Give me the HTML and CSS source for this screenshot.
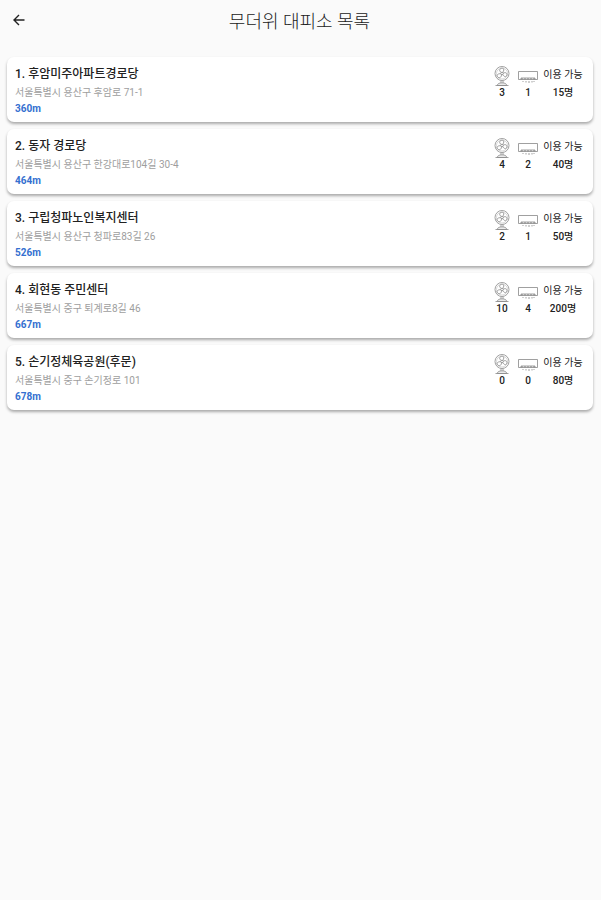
FILE: index.html
```html
<!DOCTYPE html>
<html lang="ko">
<head>
    <meta charset="UTF-8">
    <meta name="viewport" content="width=device-width, initial-scale=1.0">
    <title>무더위 대피소 목록</title>
    <link rel="stylesheet" href="styles.css">
</head>
<body>
    <!-- 아이콘 -->
    <svg class="sprite" aria-hidden="true">
        <symbol id="fan" viewBox="0 0 16 20">
            <circle cx="8" cy="7.5" r="7"/>
            <circle cx="8" cy="7.5" r="5.5" stroke-opacity="0.4"/>
            <circle cx="8" cy="7.5" r="1.3"/>
            <path d="M7.3 6.4C4.5 5 5.5 2 8.5 2.3C10.5 2.5 10 5 8.700 6.400M9.200 7.200C12 5.500 14 8 12.500 10C11.300 11.500 9.500 10 8.800 8.600M7.500 8.700C7.500 12 4.500 12.500 3.200 10.500C2.300 8.700 4.500 7.500 6.700 7.700"/>
            <path d="M7 14.5V17M9 14.5V17M3.500 19.300C3.500 17.500 5 17 8 17S12.500 17.500 12.500 19.300ZM1.500 19.500H14.500"/>
        </symbol>
        <symbol id="aircon" viewBox="0 0 20 14">
            <path d="M.5 1.5H19.5V9.5H.5ZM3 9.5V8H17V9.5"/>
            <path d="M3 8.800H17" stroke-dasharray="2 1"/>
            <path d="M5 11V12M8 11V12.500M11 11V13M14 11V12.500M16 11V12"/>
        </symbol>
    </svg>

    <header class="header">
        <button class="back" type="button" aria-label="뒤로">
            <svg viewBox="0 0 12 12"><path d="M11.5 6H1M6 1L1 6L6 11"/></svg>
        </button>
        <h1 class="title">무더위 대피소 목록</h1>
    </header>

    <main class="list">
        <article class="card">
            <div class="info">
                <h2 class="name">1. 후암미주아파트경로당</h2>
                <p class="address">서울특별시 용산구 후암로 71-1</p>
                <p class="distance">360m</p>
            </div>
            <div class="stats">
                <div class="stat"><svg class="fan"><use href="#fan"/></svg><span>3</span></div>
                <div class="stat"><svg class="aircon"><use href="#aircon"/></svg><span>1</span></div>
                <div class="stat capacity"><span class="label">이용 가능</span><span>15명</span></div>
            </div>
        </article>
        <article class="card">
            <div class="info">
                <h2 class="name">2. 동자 경로당</h2>
                <p class="address">서울특별시 용산구 한강대로104길 30-4</p>
                <p class="distance">464m</p>
            </div>
            <div class="stats">
                <div class="stat"><svg class="fan"><use href="#fan"/></svg><span>4</span></div>
                <div class="stat"><svg class="aircon"><use href="#aircon"/></svg><span>2</span></div>
                <div class="stat capacity"><span class="label">이용 가능</span><span>40명</span></div>
            </div>
        </article>
        <article class="card">
            <div class="info">
                <h2 class="name">3. 구립청파노인복지센터</h2>
                <p class="address">서울특별시 용산구 청파로83길 26</p>
                <p class="distance">526m</p>
            </div>
            <div class="stats">
                <div class="stat"><svg class="fan"><use href="#fan"/></svg><span>2</span></div>
                <div class="stat"><svg class="aircon"><use href="#aircon"/></svg><span>1</span></div>
                <div class="stat capacity"><span class="label">이용 가능</span><span>50명</span></div>
            </div>
        </article>
        <article class="card">
            <div class="info">
                <h2 class="name">4. 회현동 주민센터</h2>
                <p class="address">서울특별시 중구 퇴계로8길 46</p>
                <p class="distance">667m</p>
            </div>
            <div class="stats">
                <div class="stat"><svg class="fan"><use href="#fan"/></svg><span>10</span></div>
                <div class="stat"><svg class="aircon"><use href="#aircon"/></svg><span>4</span></div>
                <div class="stat capacity"><span class="label">이용 가능</span><span>200명</span></div>
            </div>
        </article>
        <article class="card">
            <div class="info">
                <h2 class="name">5. 손기정체육공원(후문)</h2>
                <p class="address">서울특별시 중구 손기정로 101</p>
                <p class="distance">678m</p>
            </div>
            <div class="stats">
                <div class="stat"><svg class="fan"><use href="#fan"/></svg><span>0</span></div>
                <div class="stat"><svg class="aircon"><use href="#aircon"/></svg><span>0</span></div>
                <div class="stat capacity"><span class="label">이용 가능</span><span>80명</span></div>
            </div>
        </article>
    </main>
</body>
</html>
```
FILE: styles.css
```css
* {
    box-sizing: border-box;
}

body {
    margin: 0;
    background-color: #fafafa;
    color: #212121;
    font-family: Roboto, "Noto Sans CJK KR", sans-serif;
}

h1, h2, p {
    margin: 0;
}

.sprite {
    position: absolute;
    width: 0;
    height: 0;
}

svg {
    fill: none;
    stroke: #888;
    stroke-width: 0.8;
}

.header {
    display: grid;
    grid-template-columns: 38px 1fr 40px;
    align-items: center;
    height: 40px;
}

.back {
    display: flex;
    align-items: center;
    justify-content: center;
    height: 40px;
    padding: 0;
    border: none;
    background: none;
    cursor: pointer;
}

.back svg {
    width: 12px;
    height: 12px;
    stroke: #222;
    stroke-width: 1.4;
}

.title {
    padding-top: 3px;
    font-size: 18px;
    font-weight: 300;
    line-height: 24px;
    text-align: center;
}

.list {
    display: flex;
    flex-direction: column;
    gap: 7px;
    padding: 17px 8px 17px 7px;
}

.card {
    display: flex;
    justify-content: space-between;
    padding: 8px 11px 6px 8px;
    border-radius: 7px;
    background-color: #fff;
    box-shadow: 0 2px 3px rgba(0, 0, 0, 0.32);
}

.name {
    font-size: 12px;
    font-weight: 500;
    line-height: 18px;
}

.address {
    padding-top: 1px;
    color: #9e9e9e;
    font-size: 10px;
    line-height: 18px;
}

.distance {
    color: #3470d0;
    font-size: 10px;
    font-weight: 700;
    line-height: 14px;
}

.stats {
    display: flex;
    gap: 6px;
    padding-top: 1px;
}

.stat {
    display: flex;
    flex-direction: column;
    align-items: center;
    width: 20px;
    font-size: 10px;
    font-weight: 500;
    line-height: 14px;
}

.fan {
    width: 16px;
    height: 20px;
}

.aircon {
    width: 20px;
    height: 14px;
    margin: 4px 0 2px;
}

.capacity {
    width: 38px;
    white-space: nowrap;
}

.label {
    height: 20px;
    font-weight: 400;
    line-height: 18px;
}
```
